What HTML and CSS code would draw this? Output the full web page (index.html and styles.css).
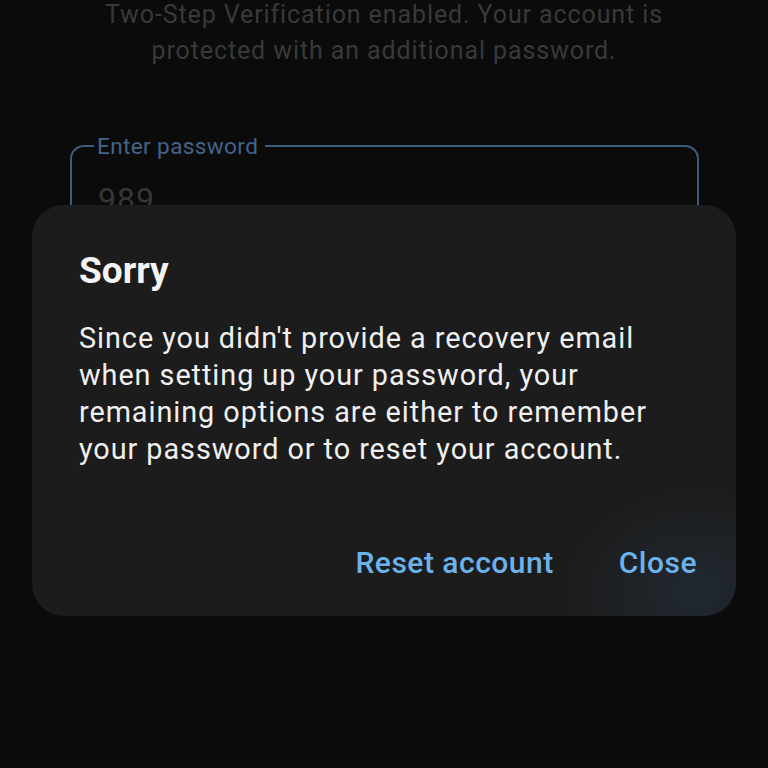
FILE: index.html
```html
<!DOCTYPE html>
<html>
<head>
<meta charset="utf-8">
<link rel="stylesheet" href="styles.css">
</head>
<body>
<div class="screen">
  <p class="intro">Two-Step Verification enabled. Your account is<br>protected with an additional password.</p>
  <fieldset class="field">
    <legend class="field-label">Enter password</legend>
    <div class="field-value">989</div>
  </fieldset>
  <div class="dialog">
    <h1 class="dialog-title">Sorry</h1>
    <p class="dialog-body">Since you didn't provide a recovery email when setting up your password, your remaining options are either to remember your password or to reset your account.</p>
    <div class="dialog-actions">
      <span class="action">Reset account</span>
      <span class="action">Close</span>
    </div>
  </div>
</div>
</body>
</html>
```
FILE: styles.css
```css
html, body {
  margin: 0;
  padding: 0;
  background: #0b0b0b;
}
.screen {
  position: relative;
  width: 768px;
  height: 768px;
  overflow: hidden;
  font-family: Roboto, "Noto Sans", sans-serif;
}
.intro {
  margin: -3px 0 0;
  text-align: center;
  font-size: 25px;
  line-height: 36px;
  letter-spacing: 0.9px;
  color: #393939;
}
.field {
  margin: 65px 0 0 70px;
  width: 629px;
  height: 110px;
  box-sizing: border-box;
  border: 2.5px solid #3e5d7d;
  border-radius: 14px;
  padding: 0 0 0 22px;
}
.field-label {
  padding: 0 7px 0 3px;
  font-size: 22.5px;
  line-height: 24px;
  letter-spacing: 0.4px;
  color: #43648a;
}
.field-value {
  margin: 21px 0 0 4px;
  font-size: 32px;
  line-height: 40px;
  letter-spacing: 1px;
  color: #363636;
}
.dialog {
  position: absolute;
  left: 32px;
  top: 205px;
  width: 704px;
  height: 411px;
  box-sizing: border-box;
  padding: 44px 39px 33px 47px;
  border-radius: 32px;
  background:
    radial-gradient(ellipse 130px 100px at 665px 385px, rgba(45, 80, 115, 0.24), rgba(45, 80, 115, 0) 100%),
    #1c1c1c;
  display: flex;
  flex-direction: column;
}
.dialog-title {
  margin: 0;
  font-size: 37px;
  line-height: 44px;
  font-weight: 700;
  color: #f4f4f4;
}
.dialog-body {
  margin: 27px 0 0;
  font-size: 28.8px;
  line-height: 37px;
  letter-spacing: 0.95px;
  color: #f0f0f0;
}
.dialog-actions {
  margin-top: auto;
  display: flex;
  justify-content: flex-end;
  gap: 65px;
}
.action {
  font-size: 30px;
  line-height: 40px;
  font-weight: 500;
  letter-spacing: 0.5px;
  color: #6cb2ea;
}
```
